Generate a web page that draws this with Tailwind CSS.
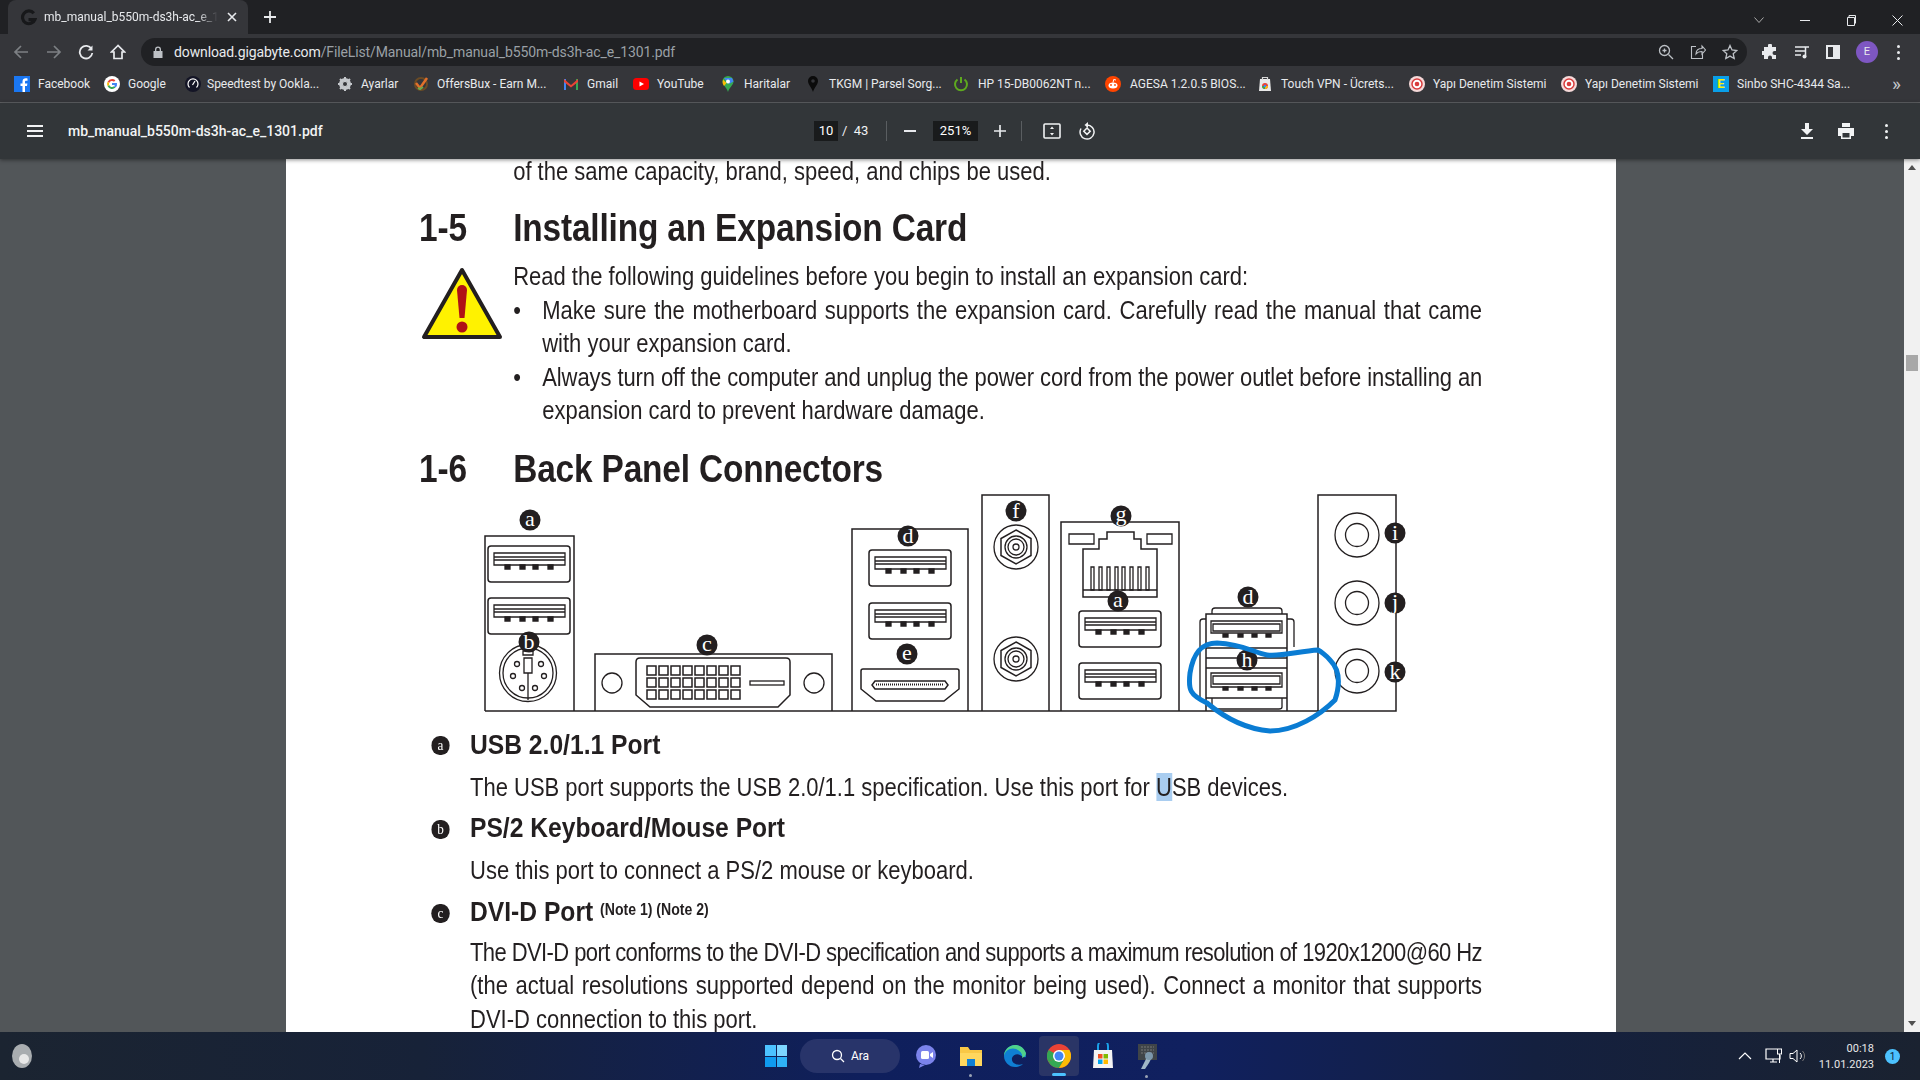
<!DOCTYPE html>
<html lang="tr">
<head>
<meta charset="UTF-8" />
<title>mb_manual_b550m-ds3h-ac_e_1301.pdf</title>
<script src="https://cdn.jsdelivr.net/npm/@tailwindcss/browser@4"></script>
</head>
<body class="w-[1920px] h-[1080px] overflow-hidden flex flex-col bg-[#202124] font-['Roboto',sans-serif]">

<!-- tab strip -->
<div class="h-[34px] flex items-end text-white bg-[#202124] shrink-0">
  <div class="ml-2 w-[240px] h-[34px] bg-[#35363a] rounded-t-lg flex items-center pl-3">
    <svg width="17" height="17" viewBox="0 0 16 16" class="mr-[7px]"><path d="M13 4a6 6 0 1 0 1 6H8" fill="none" stroke="#17181a" stroke-width="3"/></svg>
    <span class="w-[174px] overflow-hidden whitespace-nowrap text-[12px] text-[#e8eaed] [mask-image:linear-gradient(90deg,#000_88%,transparent)]">mb_manual_b550m-ds3h-ac_e_1301.pdf</span>
    <svg width="10" height="10" viewBox="0 0 10 10" class="ml-[9px]"><path d="M1 1l8 8M9 1l-8 8" stroke="#e8eaed" stroke-width="1.6"/></svg>
  </div>
  <svg width="14" height="14" viewBox="0 0 14 14" class="ml-[15px] mb-[10px]"><path d="M7 1v12M1 7h12" stroke="#e8eaed" stroke-width="1.8"/></svg>
  <div class="ml-auto h-[28px] flex items-center">
    <svg width="10" height="6" viewBox="0 0 10 6" class="mr-[36px]"><path d="M.5.5L5 5.5 9.5.5" fill="none" stroke="#aaa" /></svg>
    <div class="w-[10px] h-px bg-[#e8eaed] mr-[36px]"></div>
    <svg width="10" height="11" viewBox="0 0 10 11" class="mr-[36px]"><path d="M1.5 2.5h7v8h-7zM3 2.500V.5h6.500v8" fill="none" stroke="#e8eaed"/></svg>
    <svg width="11" height="11" viewBox="0 0 11 11" class="mr-[17px]"><path d="M.5.5l10 10M10.500.5l-10 10" stroke="#e8eaed"/></svg>
  </div>
</div>

<!-- address toolbar -->
<div class="h-[36px] bg-[#35363a] flex items-center shrink-0">
  <svg width="16" height="16" viewBox="0 0 16 16" class="ml-[13px]"><path d="M15 8H2M8 2L2 8l6 6" fill="none" stroke="#7d8084" stroke-width="1.7"/></svg>
  <svg width="16" height="16" viewBox="0 0 16 16" class="ml-[17px]"><path d="M1 8h13M8 2l6 6-6 6" fill="none" stroke="#7d8084" stroke-width="1.7"/></svg>
  <svg width="16" height="16" viewBox="0 0 16 16" class="ml-[16px]"><path d="M13.500 5A6.300 6.300 0 1 0 14.300 9" fill="none" stroke="#e8eaed" stroke-width="1.8"/><path d="M14.500 1.500V6.500H9.500z" fill="#e8eaed"/></svg>
  <svg width="16" height="16" viewBox="0 0 16 16" class="ml-4"><path d="M8 1.500L1.500 8H4v6.500h8V8h2.500z" fill="none" stroke="#e8eaed" stroke-width="1.700"/></svg>
  <div class="ml-[15px] w-[1606px] h-[28px] bg-[#202124] rounded-full flex items-center">
    <svg width="10" height="12" viewBox="0 0 10 12" class="ml-3"><path d="M2 5V3.500a3 3 0 0 1 6 0V5h1.500v7H.5V5zM3.300 5h3.400V3.500a1.700 1.700 0 0 0-3.400 0z" fill="#bdc1c6"/></svg>
    <span class="ml-[11px] text-[14px] tracking-[-0.12px] text-[#e8eaed] whitespace-nowrap">download.gigabyte.com<span class="text-[#9aa0a6]">/FileList/Manual/mb_manual_b550m-ds3h-ac_e_1301.pdf</span></span>
    <svg width="16" height="16" viewBox="0 0 16 16" class="ml-auto"><circle cx="6.500" cy="6.500" r="5" fill="none" stroke="#bdc1c6" stroke-width="1.300"/><path d="M10.500 10.500L15 15M4.500 6.500h4M6.500 4.500v4" stroke="#bdc1c6" stroke-width="1.300"/></svg>
    <svg width="16" height="16" viewBox="0 0 16 16" class="ml-4"><path d="M6 2.500H1.500v12h11V10M6 10c0-4 2.500-5.500 6-5.500V2l3.500 4-3.500 4V7.500C9.500 7.500 7.500 8 6 10z" fill="none" stroke="#bdc1c6" stroke-width="1.100"/></svg>
    <svg width="16" height="16" viewBox="0 0 16 16" class="ml-4 mr-[9px]"><path d="M8 1.500l2 4.500 4.800.5-3.600 3.200 1 4.800L8 12.100l-4.200 2.400 1-4.800L1.200 6.500 6 6z" fill="none" stroke="#bdc1c6" stroke-width="1.300"/></svg>
  </div>
  <svg width="16" height="16" viewBox="0 0 16 16" class="ml-[15px]"><path d="M6 1.500a2 2 0 0 1 4 0V3h4v4h-1.500a2 2 0 0 0 0 4H14v4h-4v-1.500a2 2 0 0 0-4 0V15H2v-4H.5a2 2 0 0 1 0-4H2V3h4z" fill="#e8eaed"/></svg>
  <svg width="16" height="16" viewBox="0 0 16 16" class="ml-4"><path d="M1 3h10M1 7h10M1 11h6" stroke="#e8eaed" stroke-width="1.500"/><path d="M11.500 12.500V3H15" fill="none" stroke="#e8eaed" stroke-width="1.500"/><circle cx="10.500" cy="12.500" r="2" fill="#e8eaed"/></svg>
  <div class="ml-[16px] w-[14px] h-[14px] border-2 border-[#e8eaed] border-r-[7px]"></div>
  <div class="ml-[16px] w-[22px] h-[22px] rounded-full bg-[#7e57c2] flex items-center justify-center text-[11px] text-[#e8eaed]">E</div>
  <div class="ml-[19px] flex flex-col gap-[3px]"><i class="w-[3px] h-[3px] rounded-full bg-[#e8eaed]"></i><i class="w-[3px] h-[3px] rounded-full bg-[#e8eaed]"></i><i class="w-[3px] h-[3px] rounded-full bg-[#e8eaed]"></i></div>
</div>

<!-- bookmarks -->
<div class="h-[27px] pb-[5px] bg-[#35363a] border-b border-[#5f6164] box-content flex items-center pl-[14px] text-[12px] text-[#e8eaed] whitespace-nowrap shrink-0 [&>div>svg]:shrink-0">
  <div class="w-[90px] flex items-center gap-2"><svg width="16" height="16" viewBox="0 0 16 16"><rect width="16" height="16" fill="#1a77f2"/><path d="M11 16v-6h2l.4-2.500H11V6c0-.8.3-1.300 1.400-1.300h1.100V2.500c-2.900-.5-5 .2-5 3.200v1.800H6.500V10h2v6z" fill="#fff"/></svg>Facebook</div>
  <div class="w-[81px] flex items-center gap-2"><svg width="16" height="16" viewBox="0 0 16 16"><circle cx="8" cy="8" r="8" fill="#fff"/><path d="M8 3a5 5 0 0 1 3.400 1.300L10 5.700A3 3 0 0 0 5.200 7L3.600 5.700A5 5 0 0 1 8 3z" fill="#ea4335"/><path d="M3.600 5.700L5.200 7a3 3 0 0 0 0 2L3.600 10.300a5 5 0 0 1 0-4.600z" fill="#fbbc05"/><path d="M5.200 9A3 3 0 0 0 10 10.300l1.500 1.300A5 5 0 0 1 3.600 10.300z" fill="#34a853"/><path d="M8 7h5a5 5 0 0 1-1.500 4.600L10 10.300c.4-.3.700-.8.800-1.300H8z" fill="#4285f4"/></svg>Google</div>
  <div class="w-[152px] flex items-center gap-[6px]"><svg width="16" height="16" viewBox="0 0 16 16"><circle cx="8" cy="8" r="8" fill="#141526"/><path d="M4.500 11.500a5 5 0 1 1 7 0" fill="none" stroke="#fff" stroke-width="1.200"/><path d="M7.500 9l2.500-4" stroke="#fff" stroke-width="1.200"/></svg>Speedtest by Ookla...</div>
  <div class="w-[76px] flex items-center gap-2"><svg width="16" height="16" viewBox="0 0 16 16"><circle cx="8" cy="8" r="4.500" fill="none" stroke="#c4c7cb" stroke-width="3"/><path d="M8 1v14M1 8h14M3 3l10 10M13 3L3 13" stroke="#c4c7cb" stroke-width="2"/><circle cx="8" cy="8" r="2" fill="#35363a"/></svg>Ayarlar</div>
  <div class="w-[150px] flex items-center gap-2"><svg width="16" height="16" viewBox="0 0 16 16"><circle cx="8" cy="8" r="6" fill="none" stroke="#6b4b25" stroke-width="2"/><path d="M3 7l4 5 7-10" fill="none" stroke="#e2702a" stroke-width="2.500"/><path d="M5 12l2 1 3-2" fill="none" stroke="#6aa84f" stroke-width="2"/></svg>OffersBux - Earn M...</div>
  <div class="w-[70px] flex items-center gap-2"><svg width="16" height="16" viewBox="0 0 16 16"><path d="M1 14V3l2 0 0 11z" fill="#4285f4"/><path d="M15 14V3h-2v11z" fill="#34a853"/><path d="M1 3l7 6 7-6v3L8 11.500 1 6z" fill="#ea4335"/></svg>Gmail</div>
  <div class="w-[87px] flex items-center gap-2"><svg width="16" height="16" viewBox="0 0 16 16"><rect y="2" width="16" height="12" rx="3.500" fill="#f00"/><path d="M6.500 5.500v5L11 8z" fill="#fff"/></svg>YouTube</div>
  <div class="w-[85px] flex items-center gap-2"><svg width="16" height="16" viewBox="0 0 16 16"><path d="M8 0a5.500 5.500 0 0 1 5.500 5.500C13.500 9 9.500 11 8 16 6.500 11 2.500 9 2.500 5.500A5.500 5.500 0 0 1 8 0z" fill="#34a853"/><path d="M4 2l8 0 1.500 3.500L9 8z" fill="#4285f4"/><path d="M3 3.500L6.500 7 4 10C3 8.500 2 7 3 3.500z" fill="#fbbc05"/><circle cx="8" cy="5.500" r="2" fill="#fff"/></svg>Haritalar</div>
  <div class="w-[148px] flex items-center gap-2"><svg width="16" height="16" viewBox="0 0 16 16"><path d="M8 0a5 5 0 0 1 5 5c0 3.500-3.500 6-5 11-1.500-5-5-7.500-5-11a5 5 0 0 1 5-5z" fill="#0b0b0b"/><circle cx="8" cy="5" r="1.800" fill="#35363a"/></svg>TKGM | Parsel Sorg...</div>
  <div class="w-[152px] flex items-center gap-[9px]"><svg width="16" height="16" viewBox="0 0 16 16"><path d="M4.500 3.500a6 6 0 1 0 7 0M8 1v6" fill="none" stroke="#5ea91f" stroke-width="2"/></svg>HP 15-DB0062NT n...</div>
  <div class="w-[152px] flex items-center gap-[9px]"><svg width="16" height="16" viewBox="0 0 16 16"><circle cx="8" cy="8" r="8" fill="#ff4500"/><ellipse cx="8" cy="9.500" rx="4.500" ry="3" fill="#fff"/><circle cx="6" cy="9" r=".9" fill="#ff4500"/><circle cx="10" cy="9" r=".9" fill="#ff4500"/><path d="M8 6.500l.7-3 2.300.5" fill="none" stroke="#fff"/></svg>AGESA 1.2.0.5 BIOS...</div>
  <div class="w-[152px] flex items-center gap-2"><svg width="16" height="16" viewBox="0 0 16 16"><path d="M3 3h10l1 12H2z" fill="#e9e9e9"/><path d="M5.500 4V1.500h5V4" fill="none" stroke="#d8d8d8" stroke-width="1.200"/><circle cx="8" cy="10" r="3" fill="#ea4335"/><path d="M8 10h3a3 3 0 0 1-3 3z" fill="#fbbc05"/><path d="M5 10a3 3 0 0 0 3 3v-3z" fill="#34a853"/><circle cx="8" cy="10" r="1.200" fill="#4285f4"/></svg>Touch VPN - Ücrets...</div>
  <div class="w-[152px] flex items-center gap-2"><svg width="16" height="16" viewBox="0 0 16 16"><circle cx="8" cy="8" r="8" fill="#f6d9d9"/><circle cx="8" cy="8" r="5" fill="#fff" stroke="#d83c3c" stroke-width="1.500"/><circle cx="8" cy="8" r="2.300" fill="#d83c3c"/></svg>Yapı Denetim Sistemi</div>
  <div class="w-[152px] flex items-center gap-2"><svg width="16" height="16" viewBox="0 0 16 16"><circle cx="8" cy="8" r="8" fill="#f6d9d9"/><circle cx="8" cy="8" r="5" fill="#fff" stroke="#d83c3c" stroke-width="1.500"/><circle cx="8" cy="8" r="2.300" fill="#d83c3c"/></svg>Yapı Denetim Sistemi</div>
  <div class="w-[158px] flex items-center gap-2"><span class="w-4 h-4 bg-[#0a9fe8] flex items-center justify-center text-[#fff200] font-bold text-[13px] leading-none">E</span>Sinbo SHC-4344 Sa...</div>
  <span class="ml-auto mr-[19px] text-[19px] text-[#c4c7cb] leading-none">»</span>
</div>

<!-- pdf toolbar -->
<div class="h-[56px] bg-[#323639] flex items-center text-white shrink-0 relative z-10 shadow-[0_1px_4px_rgba(0,0,0,.45)]">
  <div class="ml-[27px] w-[16px] flex flex-col gap-[3px]"><i class="h-[2px] bg-[#f1f3f4]"></i><i class="h-[2px] bg-[#f1f3f4]"></i><i class="h-[2px] bg-[#f1f3f4]"></i></div>
  <span class="ml-[25px] w-[725px] text-[14px] font-medium text-[#f1f3f4]">mb_manual_b550m-ds3h-ac_e_1301.pdf</span>
  <span class="ml-[21px] w-[24px] h-[20px] bg-[#191b1c] text-center text-[13px] leading-[20px]">10</span>
  <span class="ml-[4px] text-[13px] text-[#f1f3f4] w-[44px]">/ &nbsp;43</span>
  <span class="w-px h-[20px] bg-[#5a5e61]"></span>
  <span class="ml-[17px] w-[12px] h-[2px] bg-[#e8eaed]"></span>
  <span class="ml-[17px] w-[45px] h-[20px] bg-[#191b1c] text-center text-[13px] leading-[20px]">251%</span>
  <svg width="14" height="14" viewBox="0 0 14 14" class="ml-[15px]"><path d="M7 1v12M1 7h12" stroke="#e8eaed" stroke-width="1.700"/></svg>
  <span class="ml-[14px] w-px h-[20px] bg-[#5a5e61]"></span>
  <svg width="18" height="16" viewBox="0 0 18 16" class="ml-[21px]"><rect x="1" y="1" width="16" height="14" rx="1" fill="none" stroke="#f1f3f4" stroke-width="1.600"/><path d="M9 3.500L7 6h4zM9 12.500L7 10h4z" fill="#f1f3f4"/></svg>
  <svg width="18" height="18" viewBox="0 0 18 18" class="ml-[17px]"><path d="M9 3a7 7 0 1 1-6 3.500" fill="none" stroke="#f1f3f4" stroke-width="1.500"/><path d="M10 0L6.500 3 10 6z" fill="#f1f3f4"/><path d="M9 6l3.200 3.200L9 12.400 5.800 9.200z" fill="none" stroke="#f1f3f4" stroke-width="1.500"/></svg>
  <svg width="14" height="16" viewBox="0 0 14 16" class="ml-[704px]"><path d="M5 0h4v6h4L7 12 1 6h4zM1 14h12v2H1z" fill="#f1f3f4"/></svg>
  <svg width="18" height="18" viewBox="0 0 18 18" class="ml-[23px]"><path d="M5 1h8v4H5zM1 6h16v8h-3v3H4v-3H1z" fill="#f1f3f4"/><path d="M5.500 11h7v4.500h-7z" fill="#323639"/></svg>
  <div class="ml-[30px] flex flex-col gap-[3px]"><i class="w-[3px] h-[3px] rounded-full bg-[#f1f3f4]"></i><i class="w-[3px] h-[3px] rounded-full bg-[#f1f3f4]"></i><i class="w-[3px] h-[3px] rounded-full bg-[#f1f3f4]"></i></div>
</div>

<!-- viewer -->
<div class="h-[873px] bg-[#525659] flex shrink-0 overflow-hidden">
  <div class="ml-[286px] w-[1330px] bg-white overflow-hidden text-[#231f20] font-['Liberation_Sans',sans-serif]">

    <div class="ml-[133px] w-[1208px] origin-left scale-x-[0.88] text-[25px]">
      <p class="ml-[107px] h-[24px] leading-[24px] whitespace-nowrap">of the same capacity, brand, speed, and chips be used.</p>
      <h2 class="mt-[20px] h-[50px] leading-[50px] flex text-[38px] tracking-[-0.2px] font-bold whitespace-nowrap"><span class="w-[107px]">1-5</span>Installing an Expansion Card</h2>
      <div class="mt-[7px] ml-[107px] text-[25px] leading-[33.600px]">
        <p class="whitespace-nowrap">Read the following guidelines before you begin to install an expansion card:</p>
        <div class="flex"><span class="w-[33px] shrink-0">•</span><p class="flex-1 min-w-0 whitespace-nowrap text-justify [text-align-last:justify]">Make sure the motherboard supports the expansion card. Carefully read the manual that came</p></div>
        <p class="ml-[33px]">with your expansion card.</p>
        <div class="flex"><span class="w-[33px] shrink-0">•</span><p class="flex-1 min-w-0 whitespace-nowrap tracking-[-0.1px]">Always turn off the computer and unplug the power cord from the power outlet before installing an</p></div>
        <p class="ml-[33px]">expansion card to prevent hardware damage.</p>
      </div>
      <h2 class="mt-[16px] h-[50px] leading-[50px] flex text-[38px] tracking-[-0.2px] font-bold whitespace-nowrap"><span class="w-[107px]">1-6</span>Back Panel Connectors</h2>
    </div>

    <!-- warning sign sits beside the guideline text -->
    <svg class="absolute left-[420px] top-[266px]" width="84" height="74" viewBox="420 266 84 74"><path d="M462 270L424 337H500Z" fill="#fff200" stroke="#231f20" stroke-width="4" stroke-linejoin="round"/><path d="M457 290a5 5 0 0 1 10 0L464.500 318h-5z" fill="#b01116"/><circle cx="462" cy="327" r="5.500" fill="#b01116"/></svg>

    <!-- back panel drawing -->
    <svg class="ml-[184px] overflow-visible" width="950" height="236" viewBox="470 494 950 236" fill="none" stroke="#231f20" stroke-width="1.300" font-family="Liberation Serif">
      <defs>
        <g id="usb"><rect x="0" y="0" width="82" height="36" rx="3" stroke-width="1.500"/><path d="M6 7h71v12H6zM6 11h71M6 14h71" /><path d="M17 19h5v4h-5zM32 19h5v4h-5zM45 19h5v4h-5zM60 19h5v4h-5z" fill="#231f20"/></g>
        <g id="coax"><circle r="22"/><path d="M0-17L15-8.500V8.500L0 17-15 8.500V-8.500Z" stroke-width="1.500"/><circle r="11"/><circle r="8"/><circle r="3"/></g>
        <g id="jack"><circle r="22"/><circle r="11.500"/></g>
      </defs>
      <path d="M485 711H1396V495H1318V711M485 711V536H574V711M595 711V654H832V711M852 711V529H968V711M982 711V495H1049V711M1061 711V522H1179V711M1206 711V614H1287V711" stroke-width="1.500"/>
      <use href="#usb" x="488" y="546"/><use href="#usb" x="488" y="598"/>
      <circle cx="528" cy="673" r="28.500"/><circle cx="528" cy="673" r="25"/><path d="M523 651h10v4h-10zM524 658h8v15h-8zM528 673v27"/>
      <circle cx="517" cy="664" r="2.500"/><circle cx="541" cy="664" r="2.500"/><circle cx="513" cy="676" r="2.500"/><circle cx="544" cy="676" r="2.500"/><circle cx="522" cy="688" r="2.500"/><circle cx="535" cy="688" r="2.500"/>
      <circle cx="612" cy="683" r="10"/><circle cx="814" cy="683" r="10"/>
      <path d="M640 658H786Q790 658 790 662V695L778 707H650L636 695V662Q636 658 640 658Z" stroke-width="1.500"/>
      <path d="M647 666h9v9h-9zM659 666h9v9h-9zM671 666h9v9h-9zM683 666h9v9h-9zM695 666h9v9h-9zM707 666h9v9h-9zM719 666h9v9h-9zM731 666h9v9h-9zM647 678h9v9h-9zM659 678h9v9h-9zM671 678h9v9h-9zM683 678h9v9h-9zM695 678h9v9h-9zM707 678h9v9h-9zM719 678h9v9h-9zM731 678h9v9h-9zM647 690h9v9h-9zM659 690h9v9h-9zM671 690h9v9h-9zM683 690h9v9h-9zM695 690h9v9h-9zM707 690h9v9h-9zM719 690h9v9h-9zM731 690h9v9h-9z" stroke-width="1.500"/>
      <rect x="750" y="681" width="34" height="4"/>
      <use href="#usb" x="869" y="550"/><use href="#usb" x="869" y="603"/>
      <path d="M863 669H957Q959 669 959 671V689L944 701H876L861 689V671Q861 669 863 669Z" stroke-width="1.500"/><path d="M875 681H945L948 685 945 689H875L872 685Z" stroke-width="1.500"/><path d="M876 684.500h68" stroke-dasharray="1 1" stroke-width="2"/>
      <use href="#coax" x="1016" y="547"/><use href="#coax" x="1016" y="659"/>
      <path d="M1069 534h25v10h-25zM1147 534h25v10h-25z"/>
      <path d="M1083 597V549H1099V539H1107V532H1134V539H1141V549H1157V597Z" stroke-width="1.500"/><path d="M1083 590H1157" />
      <path d="M1091 567h3v23h-3zM1099 567h3v23h-3zM1107 567h3v23h-3zM1115 567h3v23h-3zM1122 567h3v23h-3zM1130 567h3v23h-3zM1138 567h3v23h-3zM1146 567h3v23h-3z" stroke-width="1.300"/>
      <use href="#usb" x="1079" y="611"/><use href="#usb" x="1079" y="663"/>
      <!-- double usb stack -->
      <path d="M1212 614V611Q1212 608 1215 608H1279Q1282 608 1282 611V614M1206 619H1203Q1200 619 1200 622V697M1287 619H1291Q1294 619 1294 622V647M1206 648H1287M1206 658H1287M1206 668H1287M1212 698V707Q1212 709 1215 709H1279Q1282 709 1282 707V698M1206 698H1287"/>
      <path d="M1211 621H1282V633H1211ZM1213 624H1280V631H1213ZM1211 673H1282V687H1211ZM1213 676H1280V684H1213Z"/>
      <path d="M1223 634h5v3h-5zM1238 634h5v3h-5zM1252 634h5v3h-5zM1266 634h5v3h-5zM1223 687h5v3h-5zM1238 687h5v3h-5zM1252 687h5v3h-5zM1266 687h5v3h-5z" fill="#231f20"/>
      <use href="#jack" x="1357" y="535"/><use href="#jack" x="1357" y="603"/><use href="#jack" x="1357" y="671"/>
      <!-- letter badges -->
      <g fill="#231f20" stroke="none"><circle cx="530" cy="520" r="10.500"/><circle cx="529" cy="642" r="10.500"/><circle cx="707" cy="645" r="10.500"/><circle cx="908" cy="536" r="10.500"/><circle cx="907" cy="654" r="10.500"/><circle cx="1016" cy="511" r="10.500"/><circle cx="1121" cy="516" r="10.500"/><circle cx="1118" cy="601" r="10.500"/><circle cx="1248" cy="597" r="10.500"/><circle cx="1247" cy="660" r="10.500"/><circle cx="1395" cy="533" r="10.500"/><circle cx="1395" cy="603" r="10.500"/><circle cx="1395" cy="672" r="10.500"/></g>
      <g fill="#fff" stroke="none" font-size="22" text-anchor="middle"><text x="530" y="526">a</text><text x="529" y="649">b</text><text x="707" y="651">c</text><text x="908" y="543">d</text><text x="907" y="660">e</text><text x="1016" y="518">f</text><text x="1121" y="521">g</text><text x="1118" y="607">a</text><text x="1248" y="604">d</text><text x="1247" y="667">h</text><text x="1395" y="540">i</text><text x="1395" y="609">j</text><text x="1395" y="679">k</text></g>
      <path d="M1318 650C1300 651 1280 657 1267 655C1255 653 1243 644 1217 643C1200 643 1193 655 1190 673C1188 690 1190 695 1207 703C1225 718 1245 729 1270 731C1295 731 1320 715 1335 700C1340 685 1340 670 1330 660C1327 656 1320 651 1318 650Z" stroke="#0a7cd3" stroke-width="5" stroke-linecap="round"/>
    </svg>

    <div class="ml-[184px] w-[1150px] origin-left scale-x-[0.88] text-[25px]">
      <h3 class="h-[30px] leading-[30px] text-[28px] font-bold whitespace-nowrap relative"><i class="absolute -left-[44px] top-[6px] w-[21px] h-[19px] rounded-full bg-[#231f20] text-white not-italic font-normal text-[15px] leading-[18px] text-center font-['Liberation_Serif']">a</i>USB 2.0/1.1 Port</h3>
      <p class="mt-[10px] h-[34px] leading-[34px] whitespace-nowrap">The USB port supports the USB 2.0/1.1 specification. Use this port for <span class="bg-[#a9cdf0]">U</span>SB devices.</p>
      <h3 class="mt-[9px] h-[30px] leading-[30px] text-[28px] font-bold whitespace-nowrap relative"><i class="absolute -left-[44px] top-[7px] w-[21px] h-[19px] rounded-full bg-[#231f20] text-white not-italic font-normal text-[15px] leading-[18px] text-center font-['Liberation_Serif']">b</i>PS/2 Keyboard/Mouse Port</h3>
      <p class="mt-[10px] h-[34px] leading-[34px] whitespace-nowrap">Use this port to connect a PS/2 mouse or keyboard.</p>
      <h3 class="mt-[10px] h-[30px] leading-[30px] text-[28px] font-bold whitespace-nowrap relative"><i class="absolute -left-[44px] top-[7px] w-[21px] h-[19px] rounded-full bg-[#231f20] text-white not-italic font-normal text-[15px] leading-[18px] text-center font-['Liberation_Serif']">c</i>DVI-D Port <sup class="text-[16px] align-[-2px] leading-none">(Note 1) (Note 2)</sup></h3>
      <p class="mt-[8px] h-[34px] leading-[34px] whitespace-nowrap tracking-[-0.67px]">The DVI-D port conforms to the DVI-D specification and supports a maximum resolution of 1920x1200@60 Hz</p>
      <p class="h-[33px] leading-[33px] whitespace-nowrap text-justify [text-align-last:justify]">(the actual resolutions supported depend on the monitor being used). Connect a monitor that supports</p>
      <p class="h-[34px] leading-[34px] whitespace-nowrap">DVI-D connection to this port.</p>
    </div>
  </div>

  <!-- scrollbar -->
  <div class="ml-auto w-[16px] bg-[#f1f1f1] flex flex-col items-center justify-between relative">
    <span class="mt-[6px] w-0 h-0 border-x-[4px] border-x-transparent border-b-[5px] border-b-[#505050]"></span>
    <span class="absolute left-[2px] top-[196px] w-[12px] h-[16px] bg-[#a8a8a8]"></span>
    <span class="mb-[6px] w-0 h-0 border-x-[4px] border-x-transparent border-t-[5px] border-t-[#505050]"></span>
  </div>
</div>

<!-- taskbar -->
<div class="h-[48px] flex items-center relative text-white bg-[linear-gradient(90deg,#1b2431_0%,#172238_22%,#0f1f5c_45%,#10205f_62%,#14203f_80%,#1a2230_100%)]">
  <svg width="20" height="24" viewBox="0 0 20 24" class="ml-[12px]"><ellipse cx="10" cy="12" rx="10" ry="12" fill="#a9adb0"/><circle cx="12" cy="15" r="5" fill="#e8e8e8"/></svg>
  <div class="ml-[733px] w-[22px] h-[22px] grid grid-cols-2 gap-[1px]"><i class="bg-[#4cc2ff]"></i><i class="bg-[#7dd6ff]"></i><i class="bg-[#0f9bf0]"></i><i class="bg-[#2fb2f7]"></i></div>
  <div class="ml-[13px] w-[100px] h-[34px] rounded-full bg-[#28346a] flex items-center justify-center gap-[6px] text-[12px]"><svg width="14" height="14" viewBox="0 0 14 14"><circle cx="6" cy="6" r="4.500" fill="none" stroke="#fff" stroke-width="1.300"/><path d="M9.500 9.500L13 13" stroke="#fff" stroke-width="1.300"/></svg>Ara</div>
  <svg width="24" height="24" viewBox="0 0 24 24" class="ml-[14px]"><circle cx="12" cy="11" r="10" fill="#7b83eb"/><path d="M6 20l-1 4 6-3z" fill="#7b83eb"/><rect x="7" y="7" width="8" height="8" rx="1.500" fill="#fff"/><path d="M16 10l3-2v6l-3-2z" fill="#fff"/></svg>
  <div class="ml-[21px] relative"><svg width="24" height="24" viewBox="0 0 24 24" class="block"><path d="M1 3h8l2 3h12v16H1z" fill="#f9c846"/><path d="M1 9h22v13H1z" fill="#ffd75e"/><path d="M8 15h8v7H8z" fill="#0f7fd4"/></svg><i class="absolute left-[10px] top-[30px] w-[3px] h-[3px] rounded-full bg-[#9aa3b5]"></i></div>
  <svg width="24" height="24" viewBox="0 0 24 24" class="ml-[20px]"><path d="M23 13C23 6 18 1 12 1 6 1 1 6 1 12c0 6 5 11 11 11 3 0 6-1 8-3-5 2-12 0-11-6 1-3 5-5 8-3 2 1 4 3 6 2z" fill="#0f7fd4"/><path d="M1 12C2 6 8 3 13 5c5 2 7 6 6 9 3-1 4-3 4-5C21 4 17 1 12 1 6 1 1 6 1 12z" fill="#4fd18b"/></svg>
  <div class="ml-[12px] w-[40px] h-[40px] rounded bg-[#2a3566] flex items-center justify-center relative"><svg width="24" height="24" viewBox="0 0 24 24"><circle cx="12" cy="12" r="12" fill="#ea4335"/><path d="M12 12L1.600 18A12 12 0 0 1 1.600 6z" fill="#34a853"/><path d="M12 12l-10.400 6A12 12 0 0 0 12 24l6-10z" fill="#34a853"/><path d="M12 6h10.400A12 12 0 0 1 12 24l6-10z" fill="#fbbc05"/><circle cx="12" cy="12" r="6" fill="#fff"/><circle cx="12" cy="12" r="4.500" fill="#4285f4"/></svg><i class="absolute bottom-0 left-[13px] w-[14px] h-[3px] rounded bg-[#4cc2ff]"></i></div>
  <svg width="24" height="26" viewBox="0 0 24 26" class="ml-[12px]"><path d="M7 7V3a5 5 0 0 1 10 0v4" fill="none" stroke="#1aa0e8" stroke-width="2"/><path d="M3 7h18l1 18H2z" fill="#f4f4f4"/><rect x="7" y="11" width="4.500" height="4.500" fill="#f25022"/><rect x="12.500" y="11" width="4.500" height="4.500" fill="#7fba00"/><rect x="7" y="16.500" width="4.500" height="4.500" fill="#00a4ef"/><rect x="12.500" y="16.500" width="4.500" height="4.500" fill="#ffb900"/></svg>
  <div class="ml-[20px] relative"><svg width="24" height="26" viewBox="0 0 24 26" class="block"><rect x="3" y="1" width="19" height="16" fill="#3f4448"/><path d="M6 4h13M6 7h13M6 10h13" stroke="#777" stroke-dasharray="2 1"/><path d="M6 26l6-12 5 0-3 6-4 6z" fill="#9fb6c7"/><circle cx="14" cy="13" r="4" fill="#7c97ab"/></svg><i class="absolute left-[10px] top-[32px] w-[3px] h-[3px] rounded-full bg-[#9aa3b5]"></i></div>
  <svg width="14" height="8" viewBox="0 0 14 8" class="ml-[579px]"><path d="M1 7l6-6 6 6" fill="none" stroke="#fff" stroke-width="1.200"/></svg>
  <svg width="18" height="18" viewBox="0 0 18 18" class="ml-[13px]"><path d="M12 2H1v10h14V8M5 15h7M8 12v3" fill="none" stroke="#fff" stroke-width="1.200"/><rect x="12.500" y="2" width="4" height="5" fill="none" stroke="#fff"/><path d="M14.500 7v9" stroke="#fff"/></svg>
  <svg width="18" height="16" viewBox="0 0 18 16" class="ml-[6px]"><path d="M1 5.500h3L8 2v12L4 10.500H1z" fill="none" stroke="#fff"/><path d="M11 5a4 4 0 0 1 0 6" fill="none" stroke="#fff"/><path d="M13.500 3a7 7 0 0 1 0 10" fill="none" stroke="#777"/></svg>
  <div class="ml-[3px] w-[64px] text-right text-[11px] leading-[16px] pt-px text-[#e8e8e8]">00:18<br>11.01.2023</div>
  <div class="ml-[11px] w-[15px] h-[15px] rounded-full bg-[#4cc2ff] text-[#0b2038] text-[10px] leading-[15px] text-center">1</div>
</div>

</body>
</html>
